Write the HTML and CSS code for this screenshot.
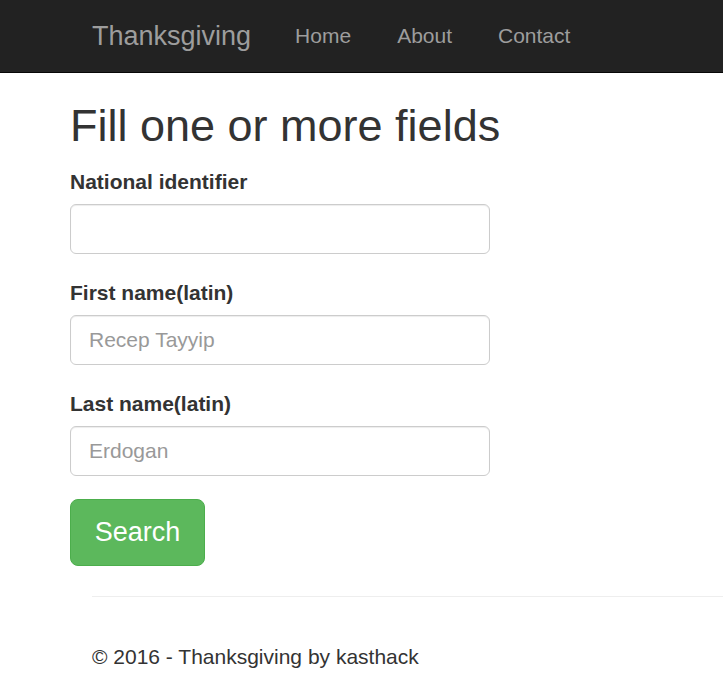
FILE: index.html
```html
<!DOCTYPE html>
<html>
<head>
<meta charset="utf-8">
<title>Thanksgiving</title>
<link rel="stylesheet" href="styles.css">
</head>
<body>
<nav class="navbar">
  <a class="brand" href="#">Thanksgiving</a>
  <ul class="nav">
    <li><a href="#">Home</a></li>
    <li><a href="#">About</a></li>
    <li><a href="#">Contact</a></li>
  </ul>
</nav>
<main class="content">
  <h1 class="title">Fill one or more fields</h1>
  <form class="form">
    <div class="group">
      <label class="label">National identifier</label>
      <input class="input" type="text">
    </div>
    <div class="group">
      <label class="label">First name(latin)</label>
      <input class="input" type="text" placeholder="Recep Tayyip">
    </div>
    <div class="group group-last">
      <label class="label">Last name(latin)</label>
      <input class="input" type="text" placeholder="Erdogan">
    </div>
    <button class="btn" type="button">Search</button>
  </form>
</main>
<footer class="footer">
  <hr class="rule">
  <p class="copy">© 2016 - Thanksgiving by kasthack</p>
</footer>
</body>
</html>
```
FILE: styles.css
```css
* { box-sizing: border-box; }
html, body { margin: 0; padding: 0; }
body {
  font-family: "Liberation Sans", Arial, sans-serif;
  font-size: 21px;
  line-height: 28px;
  color: #333;
  background: #fff;
  overflow: hidden;
}
.navbar {
  height: 73px;
  background: #222;
  border-bottom: 1px solid #080808;
  display: flex;
  align-items: center;
  padding-left: 92px;
}
.brand {
  font-size: 27px;
  color: #9d9d9d;
  text-decoration: none;
  margin-right: 21px;
}
.nav {
  list-style: none;
  margin: 0;
  padding: 0;
  display: flex;
}
.nav a {
  display: block;
  padding: 0 23px;
  font-size: 21px;
  color: #9d9d9d;
  text-decoration: none;
}
.content {
  padding-left: 70px;
}
.title {
  font-size: 45px;
  font-weight: 500;
  line-height: 1.1;
  margin: 28px 0 17px;
}
.group { margin-bottom: 25px; }
.group-last { margin-bottom: 23px; }
.label {
  display: block;
  font-weight: bold;
  font-size: 21px;
  line-height: 28px;
  margin-bottom: 8px;
}
.input {
  display: block;
  width: 420px;
  height: 50px;
  padding: 8px 18px;
  font-family: inherit;
  font-size: 21px;
  color: #555;
  border: 1px solid #ccc;
  border-radius: 6px;
  box-shadow: inset 0 1px 1px rgba(0,0,0,.075);
}
.input::placeholder { color: #999; }
.btn {
  display: block;
  width: 135px;
  height: 67px;
  background: #5cb85c;
  border: 1px solid #4cae4c;
  border-radius: 8px;
  color: #fff;
  font-family: inherit;
  font-size: 27px;
  padding: 0;
}
.footer {
  padding-left: 92px;
}
.rule {
  margin: 30px 0 0;
  border: 0;
  border-top: 1px solid #eee;
}
.copy {
  margin: 46px 0 0;
  font-size: 21px;
}
```
